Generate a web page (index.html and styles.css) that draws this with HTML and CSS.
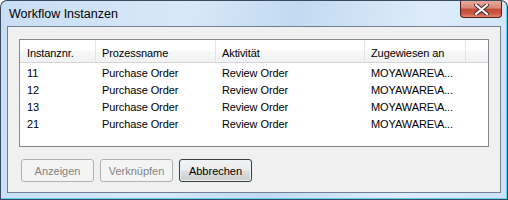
FILE: index.html
```html
<!DOCTYPE html>
<html lang="de">
<head>
    <meta charset="UTF-8">
    <title>Workflow Instanzen</title>
    <link rel="stylesheet" href="styles.css">
</head>
<body>
    <div class="window">
        <div class="titlebar">
            <span class="title">Workflow Instanzen</span>
            <div class="close">
                <svg width="15" height="11" viewBox="0 0 15 11">
                    <path d="M2 1 L13 10 M13 1 L2 10" stroke="#4a2a2a" stroke-width="4" stroke-linecap="square"/>
                    <path d="M2 1 L13 10 M13 1 L2 10" stroke="#ffffff" stroke-width="2" stroke-linecap="square"/>
                </svg>
            </div>
        </div>
        <div class="client">
            <div class="list">
                <div class="row head">
                    <div class="cell">Instanznr.</div>
                    <div class="cell">Prozessname</div>
                    <div class="cell">Aktivität</div>
                    <div class="cell">Zugewiesen an</div>
                    <div class="cell"></div>
                </div>
                <div class="rows">
                    <div class="row">
                        <div class="cell">11</div>
                        <div class="cell">Purchase Order</div>
                        <div class="cell">Review Order</div>
                        <div class="cell">MOYAWARE\A...</div>
                    </div>
                    <div class="row">
                        <div class="cell">12</div>
                        <div class="cell">Purchase Order</div>
                        <div class="cell">Review Order</div>
                        <div class="cell">MOYAWARE\A...</div>
                    </div>
                    <div class="row">
                        <div class="cell">13</div>
                        <div class="cell">Purchase Order</div>
                        <div class="cell">Review Order</div>
                        <div class="cell">MOYAWARE\A...</div>
                    </div>
                    <div class="row">
                        <div class="cell">21</div>
                        <div class="cell">Purchase Order</div>
                        <div class="cell">Review Order</div>
                        <div class="cell">MOYAWARE\A...</div>
                    </div>
                </div>
            </div>
            <div class="buttons">
                <button class="btn" disabled>Anzeigen</button>
                <button class="btn" disabled>Verknüpfen</button>
                <button class="btn default">Abbrechen</button>
            </div>
        </div>
    </div>
</body>
</html>
```

FILE: styles.css
```css
body {
    margin: 0;
    font-family: "Liberation Sans", Arial, sans-serif;
    font-size: 11px;
    background: #ffffff;
}
.window {
    box-sizing: border-box;
    width: 508px;
    height: 200px;
    border: 1px solid #3a4b60;
    border-right-color: #2e3d50;
    border-radius: 7px 7px 0 0;
    background: linear-gradient(100deg, #c8def4 0%, #d8e8f8 35%, #c2daf1 55%, #deecfa 80%, #cde2f6 100%);
    box-shadow: inset -1px -1px 0 #62d0f4;
    overflow: hidden;
}
.titlebar {
    height: 25px;
    display: flex;
    justify-content: space-between;
    align-items: flex-start;
}
.title {
    padding: 6px 0 0 8px;
    font-size: 12.5px;
    color: #000000;
}
.close {
    box-sizing: border-box;
    width: 42px;
    height: 17px;
    margin-right: 5px;
    border: 1px solid #5a1e1a;
    border-top: none;
    border-radius: 0 0 4px 4px;
    background: linear-gradient(#e8aa9c 0%, #d98574 45%, #c14a34 50%, #cc5a44 80%, #e08a70 100%);
    display: flex;
    align-items: center;
    justify-content: center;
}
.client {
    box-sizing: border-box;
    height: 167px;
    margin: 0 6px;
    border: 1px solid #6f7f94;
    background: #f0f0f0;
    padding: 12px 11px 0 11px;
}
.list {
    box-sizing: border-box;
    height: 108px;
    border: 1px solid #828790;
    background: #ffffff;
}
.row {
    display: grid;
    grid-template-columns: 76px 120px 149px 101px 1fr;
    height: 17px;
    line-height: 17px;
}
.cell {
    padding-left: 6px;
    white-space: nowrap;
    overflow: hidden;
    letter-spacing: -0.1px;
}
.row .cell:first-child {
    padding-left: 7px;
}
.head {
    box-sizing: border-box;
    height: 23px;
    border-bottom: 1px solid #d5d5d5;
    background: linear-gradient(#ffffff 0%, #ffffff 45%, #f6f7f8 55%, #f1f2f4 100%);
}
.head .cell {
    box-sizing: border-box;
    height: 22px;
    padding-top: 5px;
    line-height: 16px;
    border-right: 1px solid #e3e4e6;
}
.head .cell:last-child {
    border-right: none;
}
.rows {
    padding-top: 2px;
}
.buttons {
    display: flex;
    gap: 6px;
    margin: 12px 0 0 2px;
}
.btn {
    box-sizing: border-box;
    width: 73px;
    height: 23px;
    padding: 0;
    font-family: "Liberation Sans", Arial, sans-serif;
    font-size: 11px;
    color: #000000;
    border: 1px solid #707070;
    border-radius: 3px;
    background: linear-gradient(#f2f2f2 0%, #ebebeb 50%, #dddddd 51%, #cfcfcf 100%);
}
.btn:disabled {
    color: #838383;
    border-color: #adb2b5;
    background: #f4f4f4;
}
.btn.default {
    border-color: #3c3c3c;
    box-shadow: inset 0 0 0 1px #e8f4fa;
}
```
